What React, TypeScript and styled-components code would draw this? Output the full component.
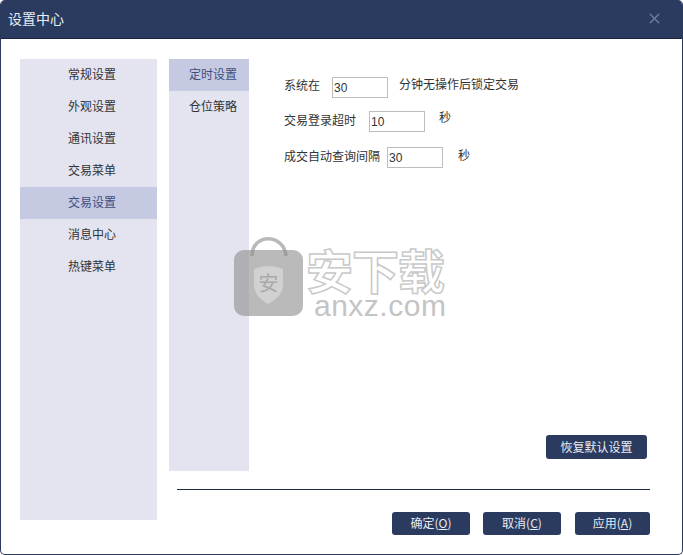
import React from 'react'
import styled, {createGlobalStyle} from 'styled-components'
import {X} from 'lucide-react'

const GlobalStyle = createGlobalStyle`
  html, body {
    margin: 0;
    padding: 0;
    background: #fff;
  }
  * {
    box-sizing: border-box;
  }
`

const mainItems = ['常规设置', '外观设置', '通讯设置', '交易菜单', '交易设置', '消息中心', '热键菜单']
const subItems = ['定时设置', '仓位策略']

const App = () => {
  return (
    <>
      <GlobalStyle />
      <Window>
        <TitleBar>
          <Title>设置中心</Title>
          <CloseIcon size={17} strokeWidth={2} />
        </TitleBar>
        <Body>
          <MainNav>
            {mainItems.map(item => (
              <MainItem key={item} $active={item === '交易设置'}>
                {item}
              </MainItem>
            ))}
          </MainNav>
          <RightSide>
            <TopArea>
              <SubNav>
                {subItems.map(item => (
                  <SubItem key={item} $active={item === '定时设置'}>
                    {item}
                  </SubItem>
                ))}
              </SubNav>
              <Panel>
                <Row $top={18}>
                  <Label $shift={-3}>系统在</Label>
                  <Field $left={12} defaultValue="30" readOnly />
                  <Label $left={-3} $shift={-4}>
                    分钟无操作后锁定交易
                  </Label>
                </Row>
                <Row $top={13}>
                  <Label $shift={-2}>交易登录超时</Label>
                  <Field $left={13} defaultValue="10" readOnly />
                  <Label $left={0} $shift={-5}>
                    秒
                  </Label>
                </Row>
                <Row $top={15}>
                  <Label $shift={-2}>成交自动查询间隔</Label>
                  <Field $left={7} defaultValue="30" readOnly />
                  <Label $left={1} $shift={-3}>
                    秒
                  </Label>
                </Row>
                <Restore>
                  <DarkButton $width={101} $height={24}>
                    恢复默认设置
                  </DarkButton>
                </Restore>
              </Panel>
            </TopArea>
            <Divider />
            <Footer>
              <DarkButton $width={78} $height={23}>
                确定(<u>O</u>)
              </DarkButton>
              <DarkButton $width={78} $height={23}>
                取消(<u>C</u>)
              </DarkButton>
              <DarkButton $width={75} $height={23}>
                应用(<u>A</u>)
              </DarkButton>
            </Footer>
          </RightSide>
        </Body>
        <Watermark>
          <BagIcon width="72" height="82" viewBox="0 0 72 82">
            <path
              d="M19 20 C19 -3 51 -3 53 20"
              fill="none"
              stroke="#b9b9b9"
              strokeWidth="3.5"
            />
            <rect x="1" y="14" width="69" height="66" rx="10" fill="#8f8f8f" opacity="0.62" />
            <path
              d="M21 33 Q35 27 50 33 L50 50 Q49 61 35 68 Q22 61 21 50 Z"
              fill="#d8d8d8"
              opacity="0.75"
            />
            <ShieldMark x="35.5" y="55" textAnchor="middle">
              安
            </ShieldMark>
          </BagIcon>
          <Brand>
            <BrandCn>安下载</BrandCn>
            <BrandEn>anxz.com</BrandEn>
          </Brand>
        </Watermark>
      </Window>
    </>
  )
}

const Window = styled('div')`
  position: relative;
  width: 683px;
  height: 555px;
  display: flex;
  flex-direction: column;
  background: #fff;
  border: 1px solid #2a3a5c;
  border-top: 0;
  border-radius: 5px;
  overflow: hidden;
  font-family: 'Noto Sans CJK SC', 'Liberation Sans', sans-serif;
  font-size: 12px;
  color: #333;
`
const TitleBar = styled('div')`
  height: 39px;
  flex: none;
  margin: 0 -1px;
  padding: 0 20px 3px 8px;
  display: flex;
  align-items: center;
  justify-content: space-between;
  background: #2b3b5f;
  border-bottom: 1px solid #1b2438;
`
const Title = styled('div')`
  font-size: 14px;
  color: #e8ebf2;
`
const CloseIcon = styled(X)`
  color: #6d7a9b;
  transform: translateY(1px);
`
const Body = styled('div')`
  flex: 1;
  display: flex;
  padding: 20px 32px 19px 19px;
  min-height: 0;
`
const MainNav = styled('div')`
  width: 137px;
  height: 461px;
  flex: none;
  background: #e3e4f0;
`
const MainItem = styled('div')<{$active?: boolean}>`
  height: 32px;
  line-height: 30px;
  padding-left: 48px;
  background: ${p => (p.$active ? '#c5c9e2' : 'transparent')};
  color: ${p => (p.$active ? '#3f4f7c' : '#333')};
`
const RightSide = styled('div')`
  flex: 1;
  display: flex;
  flex-direction: column;
  margin-left: 12px;
  min-width: 0;
`
const TopArea = styled('div')`
  height: 412px;
  flex: none;
  display: flex;
`
const SubNav = styled('div')`
  width: 80px;
  flex: none;
  background: #e3e4f0;
`
const SubItem = styled('div')<{$active?: boolean}>`
  height: 32px;
  line-height: 30px;
  padding-left: 20px;
  background: ${p => (p.$active ? '#c5c9e2' : 'transparent')};
  color: ${p => (p.$active ? '#3f4f7c' : '#333')};
`
const Panel = styled('div')`
  flex: 1;
  display: flex;
  flex-direction: column;
  padding-left: 35px;
  min-width: 0;
`
const Row = styled('div')<{$top: number}>`
  display: flex;
  align-items: center;
  height: 21px;
  margin-top: ${p => p.$top}px;
`
const Label = styled('span')<{$left?: number; $shift?: number}>`
  margin-left: ${p => p.$left ?? 0}px;
  transform: translateY(${p => p.$shift ?? 0}px);
  white-space: nowrap;
  line-height: 21px;
`
const Field = styled('input')<{$left: number}>`
  width: 56px;
  height: 21px;
  margin: 0 14px 0 ${p => p.$left}px;
  padding: 1px 0 0 1px;
  border: 1px solid #bdbdbd;
  background: #fff;
  outline: none;
  font-family: 'Liberation Sans', sans-serif;
  font-size: 12px;
  color: #333;
`
const Restore = styled('div')`
  margin-top: auto;
  margin-bottom: 12px;
  padding-right: 3px;
  display: flex;
  justify-content: flex-end;
`
const DarkButton = styled('div')<{$width: number; $height: number}>`
  width: ${p => p.$width}px;
  height: ${p => p.$height}px;
  padding-bottom: 2px;
  display: flex;
  align-items: center;
  justify-content: center;
  background: #2b3b5f;
  border-radius: 3px;
  color: #e8ebf2;
  white-space: pre;
`
const Divider = styled('div')`
  height: 1px;
  flex: none;
  margin-top: 18px;
  margin-left: 8px;
  background: #1f2a44;
`
const Footer = styled('div')`
  display: flex;
  justify-content: flex-end;
  gap: 13px;
  margin-top: 22px;
  & > :nth-child(2) {
    margin-right: 1px;
  }
`
const Watermark = styled('div')`
  position: absolute;
  left: 232px;
  top: 236px;
  display: flex;
  gap: 0;
  pointer-events: none;
`
const BagIcon = styled('svg')`
  display: block;
  flex: none;
`
const ShieldMark = styled('text')`
  font-size: 20px;
  fill: #a9a9a9;
  font-family: 'Noto Sans CJK SC', sans-serif;
`
const Brand = styled('div')`
  display: flex;
  flex-direction: column;
  padding-top: 9px;
  margin-left: 1px;
`
const BrandCn = styled('div')`
  font-size: 47px;
  line-height: 48px;
  font-weight: 700;
  letter-spacing: -1px;
  color: #fff;
  -webkit-text-stroke: 1.5px #c9c9c9;
  white-space: nowrap;
`
const BrandEn = styled('div')`
  font-family: 'Liberation Sans', sans-serif;
  font-size: 30px;
  line-height: 26px;
  letter-spacing: 0.5px;
  padding-left: 8px;
  color: #c4c4c4;
  white-space: nowrap;
`

export default App
